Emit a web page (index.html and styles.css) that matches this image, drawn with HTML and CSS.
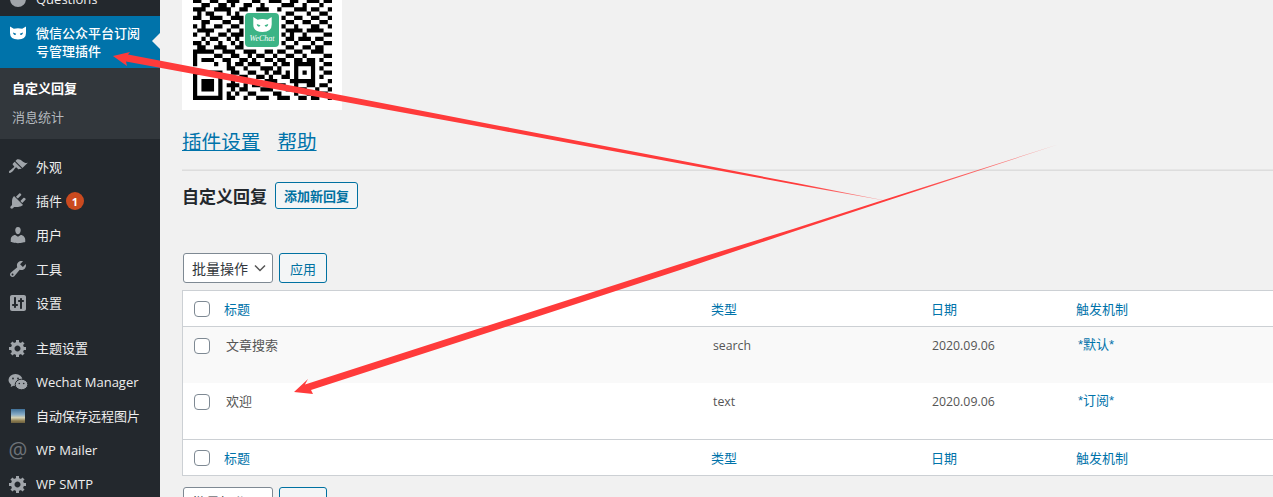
FILE: index.html
```html
<!DOCTYPE html>
<html lang="zh-CN">
<head>
  <meta charset="UTF-8" />
  <title>自定义回复</title>
  <link rel="stylesheet" href="styles.css">
</head>
<body>
  <div class="wrap">
    <nav class="sidebar">
      <a class="menu-item menu-cut"><svg class="menu-icon" viewBox="0 0 20 20"><circle cx="10" cy="10" r="8"/></svg><span>Questions</span></a>
      <a class="menu-item menu-active">
        <svg class="menu-icon cat" viewBox="0 0 20 20"><path d="M2 3.500l3.800 2.300q4.200-1 8.400 0l3.800-2.300v6.500q0 6.500-8 6.500T2 10z"/><path class="cat-eye" d="M5 9.500l3.200 1.200q-.5 1.500-1.900 1.100-1.100-.4-1.300-2.300zM15 9.500l-3.200 1.200q.5 1.500 1.900 1.100 1.100-.4 1.300-2.300z"/></svg>
        <span>微信公众平台订阅号管理插件</span>
      </a>
      <div class="submenu">
        <a class="submenu-item submenu-current">自定义回复</a>
        <a class="submenu-item">消息统计</a>
      </div>

      <a class="menu-item menu-gap"><svg class="menu-icon" viewBox="0 0 20 20"><path d="M14.480 11.060L7.410 3.990l1.500-1.500c.5-.56 2.300-.47 3.510.32 1.210.8 1.430 1.280 2.910 2.100 1.180.64 2.450 1.260 4.450.85zm-.71.71L6.700 4.700 4.930 6.470c-.39.39-.39 1.020 0 1.410l1.060 1.060c.39.39.39 1.030 0 1.420-.6.6-1.430 1.110-2.210 1.690-.35.26-.7.53-1.010.84C1.430 13.230.4 14.850 1.200 15.650c.8.79 2.420-.24 3.760-1.580.31-.31.58-.66.85-1.020.57-.78 1.080-1.610 1.690-2.210.39-.39 1.020-.39 1.410 0l1.060 1.060c.39.39 1.020.39 1.410 0z"/></svg><span class="zh">外观</span></a>
      <a class="menu-item"><svg class="menu-icon" viewBox="0 0 20 20"><path d="M13.110 4.360L9.870 7.600 8 5.730l3.240-3.240c.35-.34 1.050-.2 1.560.32.52.51.66 1.210.31 1.550zm-8 1.770l.91-1.120 9.010 9.010-1.190.84c-.71.71-2.630 1.160-3.820 1.160H6.140L4.900 17.260c-.59.59-1.540.59-2.120 0-.59-.58-.59-1.530 0-2.120l1.240-1.240v-3.880c0-1.130.4-3.190 1.090-3.890zm7.260 3.970l3.240-3.240c.34-.35 1.040-.21 1.550.31.52.51.66 1.210.31 1.550l-3.240 3.250z"/></svg><span class="zh">插件</span><b class="badge">1</b></a>
      <a class="menu-item"><svg class="menu-icon" viewBox="0 0 20 20"><path d="M10 9.250c-2.270 0-2.730-3.440-2.730-3.440C7 4.020 7.820 2 9.970 2c2.160 0 2.980 2.020 2.710 3.810 0 0-.41 3.440-2.680 3.440zm0 2.570L12.720 10c2.390 0 4.520 2.330 4.520 4.530v2.490s-3.650 1.130-7.240 1.130c-3.650 0-7.240-1.130-7.240-1.130v-2.490c0-2.250 1.940-4.480 4.470-4.480z"/></svg><span class="zh">用户</span></a>
      <a class="menu-item"><svg class="menu-icon" viewBox="0 0 20 20"><path d="M16.680 9.770c-1.340 1.340-3.300 1.670-4.950.99l-5.410 6.520c-.99.99-2.590.99-3.580 0s-.99-2.590 0-3.570l6.520-5.420c-.68-1.650-.35-3.610.99-4.950 1.280-1.280 3.120-1.620 4.720-1.060l-2.890 2.890 2.820 2.820 2.860-2.870c.53 1.580.18 3.390-1.080 4.650zM3.810 16.210c.4.39 1.040.39 1.430 0 .4-.4.4-1.040 0-1.430-.39-.4-1.030-.4-1.430 0-.39.39-.39 1.030 0 1.430z"/></svg><span class="zh">工具</span></a>
      <a class="menu-item"><svg class="menu-icon" viewBox="0 0 20 20"><path d="M18 16V4c0-1.100-.9-2-2-2H4c-1.100 0-2 .9-2 2v12c0 1.100.9 2 2 2h12c1.100 0 2-.9 2-2zM8 11h1c.55 0 1 .45 1 1s-.45 1-1 1H8v1c0 .55-.45 1-1 1s-1-.45-1-1v-1H5c-.55 0-1-.45-1-1s.45-1 1-1h1V5c0-.55.45-1 1-1s1 .45 1 1v6zm7-2h-1v6c0 .55-.45 1-1 1s-1-.45-1-1V9h-1c-.55 0-1-.45-1-1s.45-1 1-1h1V6c0-.55.45-1 1-1s1 .45 1 1v1h1c.55 0 1 .45 1 1s-.45 1-1 1z"/></svg><span class="zh">设置</span></a>

      <a class="menu-item menu-gap"><svg class="menu-icon" viewBox="0 0 20 20"><use href="#gear"/></svg><span class="zh">主题设置</span></a>
      <a class="menu-item"><svg class="menu-icon" viewBox="0 0 20 20"><ellipse cx="7.500" cy="8" rx="7" ry="6"/><path d="M3.500 12l-.8 3 3.300-1.500z"/><ellipse class="wechat-front" cx="13.500" cy="12.500" rx="6.300" ry="5.300"/><circle class="wechat-eye" cx="5" cy="6.500" r=".9"/><circle class="wechat-eye" cx="10" cy="6.500" r=".9"/><circle class="wechat-eye" cx="11.300" cy="11.500" r=".8"/><circle class="wechat-eye" cx="15.700" cy="11.500" r=".8"/></svg><span>Wechat Manager</span></a>
      <a class="menu-item"><span class="menu-thumb"></span><span class="zh">自动保存远程图片</span></a>
      <a class="menu-item"><span class="menu-at">@</span><span>WP Mailer</span></a>
      <a class="menu-item"><svg class="menu-icon" viewBox="0 0 20 20"><use href="#gear"/></svg><span>WP SMTP</span></a>
    </nav>

    <main class="content">
      <div class="qr">
        <svg class="qr-code" viewBox="0 0 33 33">
          <path d="M0 9.500h2M4 9.500h2M8 9.500h3M14 9.500h2M18 9.500h3M23 9.500h2M27 9.500h3M31 9.500h2
            M2 10.500h2M6 10.500h2M9 10.500h1M12 10.500h2M16 10.500h1M21 10.500h3M26 10.500h1M30 10.500h1
            M0 11.500h3M5 11.500h4M11 11.500h2M15 11.500h3M20 11.500h1M24 11.500h3M28 11.500h2M32 11.500h1
            M1 12.500h1M3 12.500h2M8 12.500h1M10 12.500h1M22 12.500h2M27 12.500h1M30 12.500h2
            M0 13.500h2M4 13.500h3M9 13.500h3M21 13.500h1M24 13.500h2M28 13.500h2M32 13.500h1
            M2 14.500h2M7 14.500h2M11 14.500h1M22 14.500h2M26 14.500h2M30 14.500h2
            M0 15.500h1M2 15.500h1M5 15.500h2M9 15.500h2M21 15.500h1M24 15.500h1M28 15.500h2M32 15.500h1
            M1 16.500h4M8 16.500h1M11 16.500h1M22 16.500h4M27 16.500h4
            M0 17.500h1M3 17.500h1M6 17.500h2M9 17.500h3M21 17.500h1M23 17.500h1M26 17.500h1M31 17.500h2
            M2 18.500h1M4 18.500h2M8 18.500h1M10 18.500h1M22 18.500h2M25 18.500h3M29 18.500h2
            M0 19.500h2M3 19.500h1M6 19.500h1M9 19.500h1M11 19.500h1M21 19.500h1M24 19.500h1M28 19.500h1M31 19.500h2
            M1 20.500h2M5 20.500h3M10 20.500h2M22 20.500h2M26 20.500h2M29 20.500h2
            M0 21.500h5M7 21.500h3M12 21.500h3M17 21.500h2M20 21.500h2M24 21.500h2M28 21.500h3
            M0 22.500h1M5 22.500h2M9 22.500h2M13 22.500h1M15 22.500h2M19 22.500h1M22 22.500h2M26 22.500h1M31 22.500h2
            M0 23.500h1M2 23.500h3M7 23.500h2M11 23.500h2M14 23.500h1M17 23.500h2M20 23.500h2M24 23.500h2M27 23.500h2M30 23.500h1
            M0 24.500h1M5 24.500h1M8 24.500h1M10 24.500h2M13 24.500h3M19 24.500h1M21 24.500h2M24 24.500h5M31 24.500h2
            M8 25.500h2M12 25.500h1M16 25.500h3M20 25.500h1M24 25.500h1M28 25.500h1M30 25.500h1
            M0 26.500h7M9 26.500h2M13 26.500h2M17 26.500h1M19 26.500h2M22 26.500h1M24 26.500h1M26 26.500h1M28 26.500h1M31 26.500h2
            M0 27.500h1M6 27.500h1M8 27.500h1M11 27.500h2M15 27.500h2M18 27.500h1M21 27.500h2M24 27.500h1M28 27.500h1M30 27.500h1
            M0 28.500h1M2 28.500h3M6 28.500h1M9 28.500h1M13 28.500h1M17 28.500h3M23 28.500h6M32 28.500h1
            M0 29.500h1M2 29.500h3M6 29.500h1M8 29.500h3M12 29.500h1M14 29.500h2M20 29.500h2M24 29.500h1M27 29.500h2M30 29.500h2
            M0 30.500h1M2 30.500h3M6 30.500h1M9 30.500h1M11 30.500h2M16 30.500h3M22 30.500h2M25 30.500h2M29 30.500h1M32 30.500h1
            M0 31.500h1M6 31.500h1M8 31.500h1M10 31.500h1M13 31.500h2M19 31.500h2M24 31.500h1M27 31.500h1M30 31.500h2
            M0 32.500h7M8 32.500h2M12 32.500h1M15 32.500h3M20 32.500h3M25 32.500h2M28 32.500h2M32 32.500h1"/>
        </svg>
        <div class="qr-logo">
          <svg class="qr-cat" viewBox="0 0 20 20"><path d="M2 3.500l3.800 2.300q4.200-1 8.400 0l3.800-2.300v6.500q0 6.500-8 6.500T2 10z"/><path class="qr-cat-eye" d="M5 9.500l3.200 1.200q-.5 1.500-1.900 1.100-1.100-.4-1.300-2.300zM15 9.500l-3.200 1.200q.5 1.500 1.900 1.100 1.100-.4 1.300-2.300z"/></svg>
          <span class="qr-name">WeChat</span>
        </div>
      </div>

      <div class="big-links">
        <a href="#">插件设置</a>
        <a href="#">帮助</a>
      </div>
      <hr class="rule">

      <div class="title-row">
        <h1>自定义回复</h1>
        <a class="btn btn-bold" href="#">添加新回复</a>
      </div>

      <div class="tablenav">
        <div class="select">批量操作<svg class="chevron" viewBox="0 0 12 8"><path d="M1 1.500l5 5 5-5"/></svg></div>
        <a class="btn" href="#">应用</a>
      </div>

      <table class="list-table">
        <colgroup><col class="col-cb"><col class="col-title"><col class="col-type"><col class="col-date"><col class="col-rule"></colgroup>
        <thead>
          <tr><th><input type="checkbox"></th><th>标题</th><th>类型</th><th>日期</th><th>触发机制</th></tr>
        </thead>
        <tbody>
          <tr class="alt"><td><input type="checkbox"></td><td>文章搜索</td><td class="latin">search</td><td class="latin date">2020.09.06</td><td class="rule-link">*默认*</td></tr>
          <tr><td><input type="checkbox"></td><td>欢迎</td><td class="latin">text</td><td class="latin date">2020.09.06</td><td class="rule-link">*订阅*</td></tr>
        </tbody>
        <tfoot>
          <tr><th><input type="checkbox"></th><th>标题</th><th>类型</th><th>日期</th><th>触发机制</th></tr>
        </tfoot>
      </table>

      <div class="tablenav tablenav-bottom">
        <div class="select">批量操作<svg class="chevron" viewBox="0 0 12 8"><path d="M1 1.500l5 5 5-5"/></svg></div>
        <a class="btn" href="#">应用</a>
      </div>
    </main>

    <!-- annotation arrows drawn on top of the screenshot -->
    <svg class="arrows" viewBox="0 0 1273 497">
      <defs>
        <path id="gear" d="M18 12h-2.180c-.17.7-.44 1.350-.81 1.930l1.540 1.540-2.100 2.100-1.540-1.540c-.58.36-1.230.63-1.910.79V19H8v-2.180c-.68-.16-1.330-.43-1.910-.79l-1.540 1.540-2.120-2.120 1.540-1.540c-.36-.58-.63-1.230-.79-1.910H1V9.030h2.170c.16-.7.44-1.350.8-1.940L2.430 5.550l2.100-2.100 1.540 1.540c.58-.37 1.240-.64 1.930-.81V2h3v2.180c.68.16 1.330.43 1.910.79l1.540-1.540 2.120 2.120-1.540 1.540c.36.59.64 1.240.8 1.940H18V12zm-8.500 1.500c1.660 0 3-1.340 3-3s-1.340-3-3-3-3 1.340-3 3 1.340 3 3 3z"/>
        <linearGradient id="fade1" gradientUnits="userSpaceOnUse" x1="800" y1="0" x2="890" y2="0">
          <stop offset="0" stop-color="#ff3b3b"/><stop offset="1" stop-color="#ff3b3b" stop-opacity="0.5"/>
        </linearGradient>
        <linearGradient id="fade2" gradientUnits="userSpaceOnUse" x1="900" y1="0" x2="1058" y2="0">
          <stop offset="0" stop-color="#ff3b3b"/><stop offset="1" stop-color="#ff3b3b" stop-opacity="0.5"/>
        </linearGradient>
      </defs>
      <polygon fill="url(#fade1)" points="113,56 130,52 128,54.500 360,98.700 500,125.900 680,160.600 800,183.800 890,201.500 800,185.400 680,163.400 500,130.300 360,104.700 126,61.500 127,66"/>
      <polygon fill="url(#fade2)" points="294,392 308,379 305,384.600 500,321.800 680,263.900 793,228.900 884,199.800 1058,144.500 884,201.800 793,231.700 680,269.900 500,328.800 311,390 313,394"/>
    </svg>
  </div>
</body>
</html>
```

FILE: styles.css
```css
:root {
  --sidebar: #23282d;
  --submenu: #32373c;
  --blue: #0073aa;
  --page: #f1f1f1;
  --line: #ccd0d4;
}

body {
  margin: 0;
  font-family: "Open Sans", "Noto Sans CJK SC", sans-serif;
  font-size: 13px;
  color: #444;
  background-color: var(--page);
}

.wrap {
  position: relative;
  display: flex;
  height: 497px;
  overflow: hidden;
}

/* left menu */
.sidebar {
  flex: none;
  width: 160px;
  height: 497px;
  overflow: hidden;
  background-color: var(--sidebar);
  color: #eee;
}

.menu-item {
  display: flex;
  align-items: center;
  gap: 8px;
  height: 34px;
  padding-left: 8px;
}

.menu-cut {
  margin-top: -18px;
}

.menu-gap {
  margin-top: 11px;
}

.menu-icon {
  flex: none;
  width: 20px;
  height: 20px;
  fill: #a0a5aa;
}

/* chinese labels sit a pixel higher than the latin ones */
.zh {
  padding-bottom: 2px;
}

.menu-active {
  position: relative;
  height: 52px;
  padding-right: 12px;
  background-color: var(--blue);
  color: #fff;
  font-weight: 500;
  line-height: 18px;
}

.menu-active::after {
  content: "";
  position: absolute;
  right: 0;
  top: 17px;
  border: 8px solid transparent;
  border-right-color: var(--page);
}

.menu-active .menu-icon {
  align-self: flex-start;
  margin-top: 7px;
}

.cat {
  fill: #fff;
}

.cat-eye {
  fill: var(--blue);
}

.submenu {
  padding: 6px 0 7px;
  background-color: var(--submenu);
}

.submenu-item {
  display: block;
  padding-left: 12px;
  line-height: 29px;
  color: #b4b9be;
}

.submenu-current {
  color: #fff;
  font-weight: 600;
}

.badge {
  display: flex;
  align-items: center;
  justify-content: center;
  width: 18px;
  height: 18px;
  margin-left: -4px;
  border-radius: 50%;
  background-color: #ca4a1f;
  color: #fff;
  font-size: 11px;
}

.wechat-front {
  fill: #a0a5aa;
  stroke: var(--sidebar);
  stroke-width: 1;
}

.wechat-eye {
  fill: var(--sidebar);
}

.menu-thumb {
  flex: none;
  width: 14px;
  height: 14px;
  margin: 0 3px;
  background: linear-gradient(#3f7199 0%, #88acc6 40%, #d6d2b4 62%, #8a7a4c 85%, #6d6242 100%);
}

.menu-at {
  flex: none;
  width: 20px;
  color: #6e7378;
  font-size: 21px;
  line-height: 20px;
  text-align: center;
}

/* main area */
.content {
  flex: 1;
  min-width: 0;
  overflow: hidden;
  padding-left: 22px;
}

.qr {
  position: relative;
  width: 160px;
  height: 160px;
  margin-top: -50px;
  background-color: #fff;
}

.qr-code {
  display: block;
  width: 139px;
  height: 139px;
  padding: 11px 0 0 11px;
  stroke: #000;
  stroke-width: 1;
  fill: none;
}

.qr-logo {
  position: absolute;
  left: 63px;
  top: 63px;
  display: flex;
  flex-direction: column;
  align-items: center;
  width: 34px;
  height: 34px;
  border-radius: 4px;
  background-color: #3cb486;
  box-shadow: 0 0 0 1px #fff;
}

.qr-cat {
  width: 23px;
  height: 23px;
  fill: #fff;
}

.qr-cat-eye {
  fill: #3cb486;
}

.qr-name {
  margin-top: -2px;
  color: #fff;
  font-family: "Liberation Serif", serif;
  font-size: 8px;
  font-style: italic;
  line-height: 9px;
}

.big-links {
  display: flex;
  gap: 17px;
  margin-top: 16px;
  font-size: 19.600px;
  line-height: 32px;
}

.big-links a {
  color: var(--blue);
}

.rule {
  height: 1px;
  margin: 11px 0 0;
  border: 0;
  border-bottom: 1px solid #ddd;
  background-color: #e6e6e6;
}

.title-row {
  display: flex;
  align-items: center;
  gap: 8px;
  margin-top: 11px;
}

h1 {
  margin: 0;
  color: #23282d;
  font-size: 17px;
  font-weight: 600;
}

.btn {
  display: flex;
  align-items: center;
  justify-content: center;
  box-sizing: border-box;
  height: 30px;
  padding: 0 10px;
  border: 1px solid #0071a1;
  border-radius: 3px;
  background-color: #f3f5f6;
  color: #0071a1;
  text-decoration: none;
}

.btn-bold {
  height: 27px;
  padding: 0 8px;
  font-weight: 600;
}

.tablenav {
  display: flex;
  gap: 6px;
  margin-top: 44px;
  padding-left: 1px;
}

.tablenav-bottom {
  margin-top: 11px;
}

.select {
  display: flex;
  align-items: center;
  justify-content: space-between;
  box-sizing: border-box;
  width: 90px;
  height: 30px;
  padding: 0 6px 0 8px;
  border: 1px solid #7e8993;
  border-radius: 3px;
  background-color: #fff;
  color: #32373c;
  font-size: 14px;
}

.chevron {
  width: 12px;
  height: 8px;
  fill: none;
  stroke: #555;
  stroke-width: 1.500;
}

/* list table */
.list-table {
  width: 1110px;
  margin-top: 7px;
  border: 1px solid var(--line);
  border-spacing: 0;
  background-color: #fff;
  table-layout: fixed;
}

.col-cb { width: 31px; }
.col-title { width: 487px; }
.col-type { width: 220px; }
.col-date { width: 145px; }

.list-table th {
  box-sizing: border-box;
  height: 36px;
  padding: 0 10px;
  color: var(--blue);
  font-weight: 400;
  text-align: left;
}

.list-table thead th {
  border-bottom: 1px solid var(--line);
}

.list-table tfoot th {
  border-top: 1px solid var(--line);
}

.list-table td {
  box-sizing: border-box;
  height: 56px;
  padding: 8px 12px;
  line-height: 20px;
  color: #555;
  vertical-align: top;
}

.list-table th:first-child,
.list-table td:first-child {
  padding: 0 0 0 11px;
}

.list-table td:first-child {
  padding-top: 11px;
}

.alt {
  background-color: #f9f9f9;
}

.list-table td.latin {
  padding-top: 9px;
  font-size: 12.300px;
}

.list-table td.date {
  padding-left: 11px;
}

.list-table td.rule-link {
  color: var(--blue);
  font-family: "Liberation Sans", "Noto Sans CJK SC", sans-serif;
}

input[type="checkbox"] {
  appearance: none;
  display: block;
  box-sizing: border-box;
  width: 16px;
  height: 16px;
  margin: 0;
  border: 1px solid #7e8993;
  border-radius: 4px;
  background-color: #fff;
}

.arrows {
  position: absolute;
  left: 0;
  top: 0;
  width: 1273px;
  height: 497px;
  pointer-events: none;
}
```
